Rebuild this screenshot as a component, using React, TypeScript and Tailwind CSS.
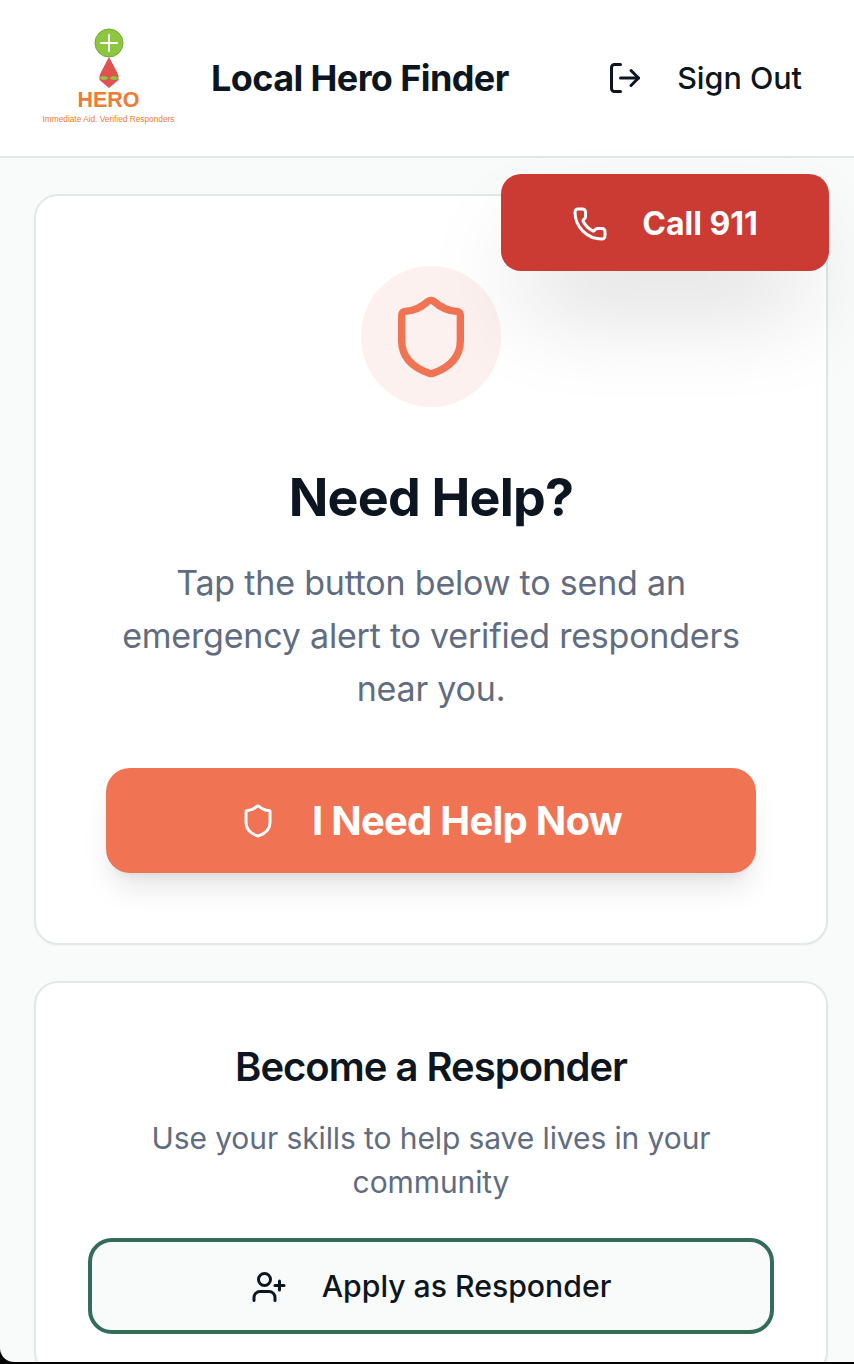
import { LogOut, Phone, Shield, UserPlus } from 'lucide-react';

function HeroLogo() {
  return (
    <div className="mb-[4px] flex w-[133px] flex-col items-center">
      <svg width="34" height="62" viewBox="0 0 34 62" className="-mb-[1px]">
        <circle cx="17" cy="15" r="14" fill="#8dc63f" stroke="#76a63a" strokeWidth="1" />
        <path d="M17 7v16M9 15h16" stroke="#fff" strokeWidth="2" strokeLinecap="round" />
        <path d="M17 29l8 15 1.5 4v4l-9.5 8-9.5-8v-4l1.5-4z" fill="#e0524f" />
        <path d="M7 50c3-2.5 7-2.5 9.5 0-2.5 2.5-6.5 2.5-9.5 0zM17.5 50c2.5-2.5 6.5-2.5 9.5 0-3 2.5-7 2.5-9.5 0z" fill="#8dc63f" />
      </svg>
      <span className="text-[21.5px] leading-[22px] font-bold text-[#ee7b36] font-['Liberation_Sans',Arial,sans-serif]">HERO</span>
      <span className="mt-[3px] whitespace-nowrap text-[8.3px] leading-[10px] text-[#ee7b36] font-['Liberation_Sans',Arial,sans-serif]">
        Immediate Aid. Verified Responders
      </span>
    </div>
  );
}

export default function App() {
  return (
    <div className="h-[1364px] w-[854px] overflow-hidden bg-black font-['Inter',sans-serif] text-[#0d1620]">
      <div className="relative h-[1362px] overflow-hidden rounded-bl-[14px] bg-[#f9fbfa]">
        {/* Header */}
        <header className="flex h-[158px] items-center border-b-2 border-[#e1e8e6] bg-white pl-[42px] pr-[52px]">
          <HeroLogo />
          <h1 className="ml-[36px] text-[36px] font-bold leading-[40px] tracking-[-0.6px]">Local Hero Finder</h1>
          <button className="ml-auto flex items-center gap-[34px] text-[30.5px] font-medium leading-[40px]">
            <LogOut className="h-[36px] w-[36px]" />
            Sign Out
          </button>
        </header>

        {/* Floating call button */}
        <button className="absolute left-[501px] top-[174px] flex h-[97px] w-[328px] items-center justify-center gap-[35px] rounded-[20px] bg-[#cb3b34] pt-[2px] text-[32px] font-bold text-white shadow-[0_50px_100px_-24px_rgba(0,0,0,0.22)]">
          <Phone className="h-[36px] w-[36px]" />
          <span className="-ml-[1px]">Call 911</span>
        </button>

        <main className="flex flex-col gap-[36px] pl-[34px] pr-[26px] pt-[36px]">
          {/* Need help card */}
          <section className="flex h-[751px] flex-col items-center rounded-[24px] border-2 border-[#e1e8e6] bg-white pt-[70px] shadow-[0_1px_2px_rgba(0,0,0,0.03)]">
            <div className="flex h-[141px] w-[140px] items-center justify-center rounded-full bg-[#fcf1ee]">
              <Shield className="h-[88px] w-[88px] text-[#f07354]" />
            </div>
            <h2 className="mt-[61px] text-[52px] font-bold leading-[60px] tracking-[-0.8px]">Need Help?</h2>
            <p className="mt-[28px] w-[640px] text-center text-[34px] leading-[53px] tracking-[-0.2px] text-[#616c80]">
              Tap the button below to send an emergency alert to verified responders near you.
            </p>
            <button className="mt-[53px] flex h-[105px] w-[650px] items-center justify-center gap-[36px] rounded-[24px] bg-[#f07354] text-[40px] font-bold tracking-[-0.75px] text-white shadow-[0_20px_30px_-6px_rgba(0,0,0,0.1),0_8px_12px_-8px_rgba(0,0,0,0.1)]">
              <Shield className="h-[36px] w-[36px]" />
              I Need Help Now
            </button>
          </section>

          {/* Responder card */}
          <section className="flex flex-col items-center rounded-[24px] border-2 border-[#e1e8e6] bg-white pt-[60px] pb-[40px] shadow-[0_1px_2px_rgba(0,0,0,0.03)]">
            <h2 className="text-[40px] font-semibold leading-[48px] tracking-[-1px]">Become a Responder</h2>
            <p className="mt-[25px] w-[620px] text-center text-[30px] leading-[44px] tracking-[-0.1px] text-[#616c80]">
              Use your skills to help save lives in your community
            </p>
            <button className="mt-[34px] flex h-[96px] w-[686px] items-center justify-center gap-[35px] rounded-[24px] border-4 border-[#336d57] bg-[#f9fbfa] pt-[1px] text-[30.2px] font-medium">
              <UserPlus className="h-[36px] w-[36px]" />
              Apply as Responder
            </button>
          </section>
        </main>
      </div>
    </div>
  );
}
